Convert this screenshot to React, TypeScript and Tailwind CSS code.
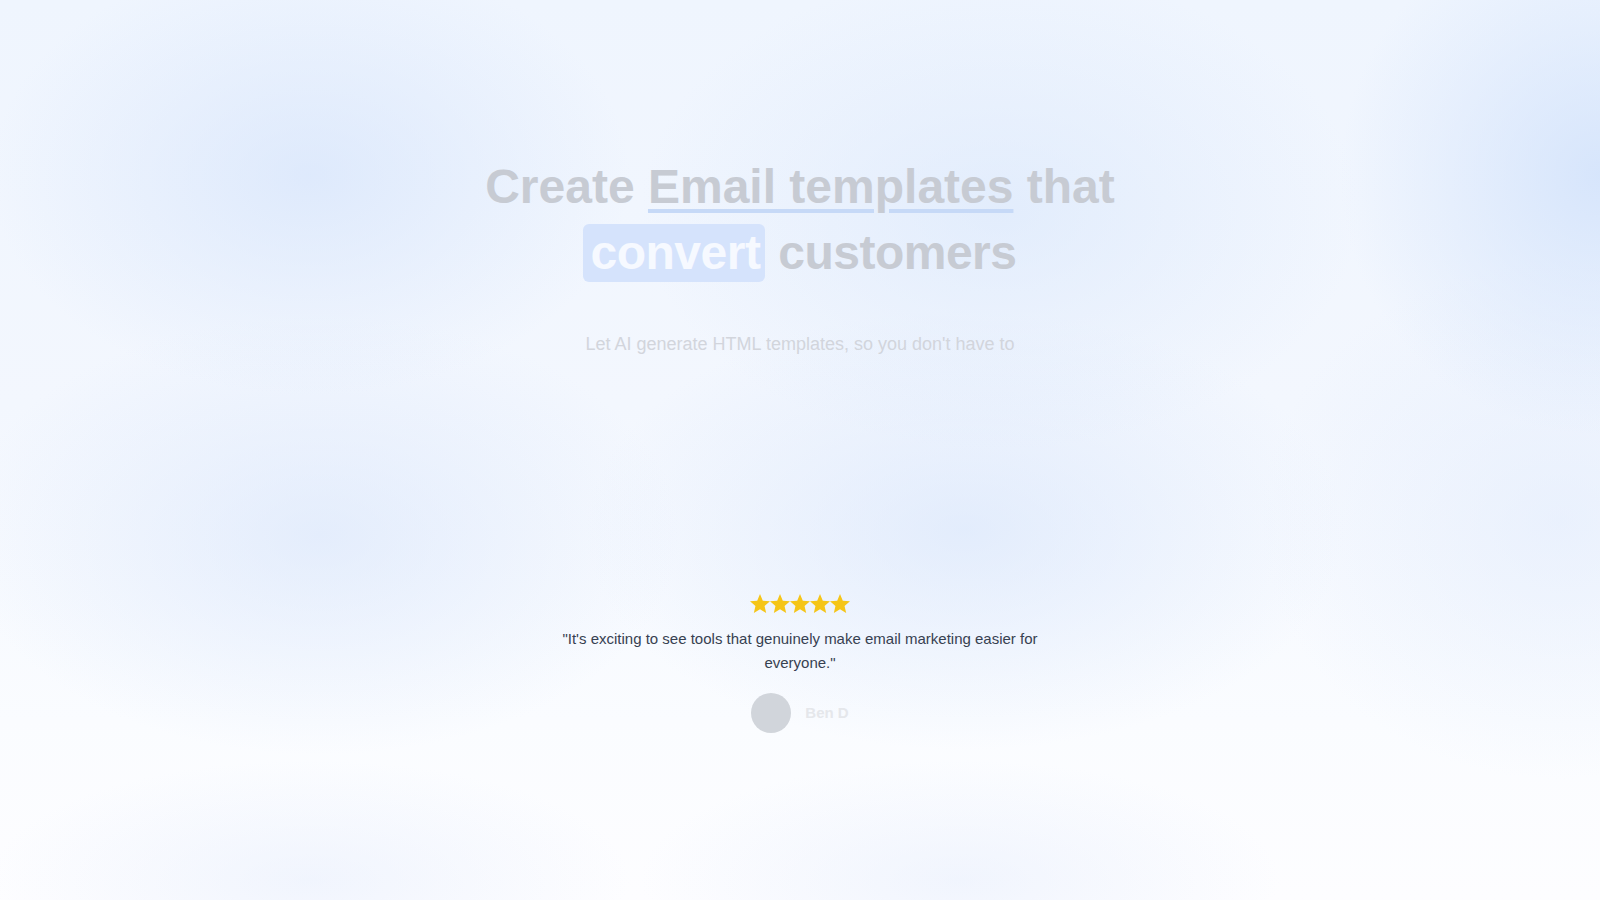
import React from "react";

function Star() {
  return (
    <svg viewBox="2 2 20 20" className="h-5 w-5" aria-hidden="true">
      <path
        fill="#f5c518"
        d="M12 17.27L18.18 21l-1.64-7.03L22 9.24l-7.19-.61L12 2 9.19 8.63 2 9.24l5.46 4.73L5.82 21z"
      />
    </svg>
  );
}

export default function App() {
  return (
    <div className="min-h-screen w-full overflow-hidden bg-[#f6f9fe] bg-[image:radial-gradient(ellipse_320px_220px_at_310px_175px,rgba(212,227,251,0.65),transparent),radial-gradient(ellipse_260px_260px_at_1600px_175px,rgba(208,225,251,0.8),transparent),radial-gradient(ellipse_360px_240px_at_1000px_210px,rgba(214,229,251,0.55),transparent),radial-gradient(ellipse_360px_220px_at_320px_535px,rgba(216,229,251,0.6),transparent),radial-gradient(ellipse_380px_220px_at_965px_530px,rgba(214,228,251,0.6),transparent),radial-gradient(ellipse_300px_260px_at_1560px_520px,rgba(222,233,252,0.5),transparent),radial-gradient(ellipse_320px_120px_at_310px_880px,rgba(226,235,252,0.45),transparent),radial-gradient(ellipse_320px_120px_at_960px_880px,rgba(226,235,252,0.45),transparent),linear-gradient(to_bottom,#eff5fe_0%,#f3f7fe_45%,#fafcff_80%,#fdfdff_100%)] font-['Liberation_Sans',Arial,sans-serif]">
      <section className="flex flex-col items-center pt-[154px]">
        <h1 className="text-center text-5xl font-bold leading-[66px] text-[#c7cbd3]">
          Create{" "}
          <span className="underline decoration-[#c6d9f7] decoration-[4px] underline-offset-[6px]">
            Email templates
          </span>{" "}
          that
          <br />
          <span className="tracking-[-0.5px]">
            <span className="inline-block rounded-md bg-[#d5e3fc] pl-[7px] pr-[5px] leading-[58px] text-[#f6f9ff]">
              convert
            </span>{" "}
            customers
          </span>
        </h1>
        <p className="mt-[44px] text-lg leading-7 text-[#d2d5dc]">
          Let AI generate HTML templates, so you don't have to
        </p>
      </section>

      <section className="mt-[236px] flex flex-col items-center">
        <div className="flex items-center">
          <Star />
          <Star />
          <Star />
          <Star />
          <Star />
        </div>
        <p className="mt-[13px] max-w-[520px] text-center text-[15px] leading-6 text-[#374151]">
          "It's exciting to see tools that genuinely make email marketing easier for everyone."
        </p>
        <div className="mt-[18px] flex items-center gap-[14px]">
          <div className="h-10 w-10 rounded-full bg-[#d1d5db]" />
          <span className="text-[15px] font-bold text-[#e5e7eb]">Ben D</span>
        </div>
      </section>
    </div>
  );
}
